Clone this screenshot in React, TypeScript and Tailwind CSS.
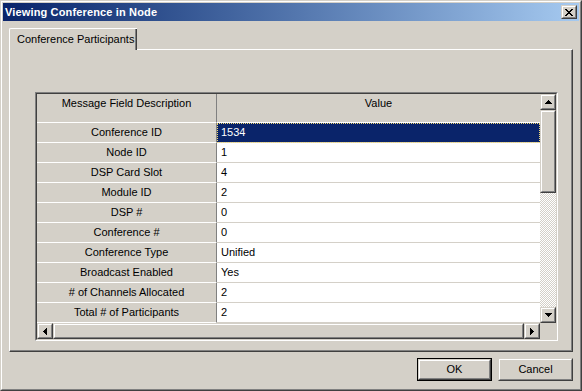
import React from "react";

const rows = [
  ["Conference ID", "1534"],
  ["Node ID", "1"],
  ["DSP Card Slot", "4"],
  ["Module ID", "2"],
  ["DSP #", "0"],
  ["Conference #", "0"],
  ["Conference Type", "Unified"],
  ["Broadcast Enabled", "Yes"],
  ["# of Channels Allocated", "2"],
  ["Total # of Participants", "2"],
];

// classic raised 3d edge, 2px
function Raised({ className = "", children }: { className?: string; children?: React.ReactNode }) {
  return (
    <div className={`border border-t-[#d4d0c8] border-l-[#d4d0c8] border-r-[#404040] border-b-[#404040] bg-[#d4d0c8] ${className}`}>
      <div className="w-full h-full border border-t-white border-l-white border-r-[#808080] border-b-[#808080] flex items-center justify-center">
        {children}
      </div>
    </div>
  );
}

function Arrow({ dir }: { dir: "up" | "down" | "left" | "right" }) {
  const pts = {
    up: "3.5,0 7,4 0,4",
    down: "0,0 7,0 3.5,4",
    left: "4,0 4,7 0,3.5",
    right: "0,0 4,3.5 0,7",
  }[dir];
  const vertical = dir === "up" || dir === "down";
  return (
    <svg width={vertical ? 7 : 4} height={vertical ? 4 : 7} shapeRendering="crispEdges">
      <polygon points={pts} fill="#000" />
    </svg>
  );
}

function CloseGlyph() {
  const px: [number, number][] = [
    [0, 0], [1, 0], [6, 0], [7, 0],
    [1, 1], [2, 1], [5, 1], [6, 1],
    [2, 2], [3, 2], [4, 2], [5, 2],
    [3, 3], [4, 3],
    [2, 4], [3, 4], [4, 4], [5, 4],
    [1, 5], [2, 5], [5, 5], [6, 5],
    [0, 6], [1, 6], [6, 6], [7, 6],
  ];
  return (
    <svg width={8} height={7} shapeRendering="crispEdges">
      {px.map(([x, y]) => (
        <rect key={`${x}-${y}`} x={x} y={y} width={1} height={1} fill="#000" />
      ))}
    </svg>
  );
}

export default function App() {
  return (
    <div className="w-[582px] h-[391px] bg-[#d4d0c8] border border-t-[#d4d0c8] border-l-[#d4d0c8] border-r-[#404040] border-b-[#404040] text-[11px] text-black font-['Liberation_Sans',Arial,sans-serif] leading-none">
      <div className="w-full h-full border border-t-white border-l-white border-r-[#808080] border-b-[#808080] p-px flex flex-col">
        {/* title bar */}
        <div className="h-[18px] flex items-center justify-between pl-[2px] pr-[2px] bg-gradient-to-r from-[#0a246a] to-[#a6caf0]">
          <span className="text-white font-bold text-[11px] tracking-[0.15px]">Viewing Conference in Node</span>
          <Raised className="w-[16px] h-[14px]">
            <CloseGlyph />
          </Raised>
        </div>

        {/* tabs + panel */}
        <div className="flex flex-col px-[6px] pt-[7px]">
          <div className="flex">
            <div className="relative z-10 -mb-px h-[22px] w-[128px] bg-[#d4d0c8] border-l border-t border-l-white border-t-white rounded-tl-[2px] flex">
              <div className="flex-1 pl-[7px] pt-[5px]">Conference Participants</div>
              <div className="w-px bg-[#808080]" />
              <div className="w-px bg-[#404040]" />
            </div>
          </div>
          <div className="h-[303px] border border-t-white border-l-white border-r-[#404040] border-b-[#404040]">
            <div className="w-full h-full border-r border-b border-r-[#808080] border-b-[#808080] pl-[25px] pt-[42px]">
              {/* grid */}
              <div className="w-[523px] h-[249px] border border-t-[#808080] border-l-[#808080] border-r-white border-b-white">
                <div className="w-full h-full border border-t-[#404040] border-l-[#404040] border-r-[#d4d0c8] border-b-[#d4d0c8] flex flex-col">
                  <div className="flex h-[229px]">
                    <div className="w-[503px] flex flex-col">
                      {/* header */}
                      <div className="flex h-[29px]">
                        <div className="w-[180px] bg-[#d4d0c8] border-r border-b border-r-[#808080] border-b-white text-center pt-[4px]">
                          Message Field Description
                        </div>
                        <div className="flex-1 bg-[#d4d0c8] border-b border-b-white text-center pt-[4px]">Value</div>
                      </div>
                      {rows.map(([label, value], i) => (
                        <div key={label} className="flex h-[20px]">
                          <div className="w-[180px] bg-[#d4d0c8] border-r border-b border-r-[#808080] border-b-white flex items-center justify-center">
                            {label}
                          </div>
                          {i === 0 ? (
                            <div className="flex-1 bg-[#0a246a] text-white border-b border-b-[#d4d0c8] flex items-center pl-[4px] outline outline-1 outline-dotted outline-[#f0d878] -outline-offset-1">
                              {value}
                            </div>
                          ) : (
                            <div className="flex-1 bg-white border-b border-b-[#d4d0c8] flex items-center pl-[4px]">{value}</div>
                          )}
                        </div>
                      ))}
                    </div>
                    {/* vertical scrollbar */}
                    <div className="w-[16px] flex flex-col">
                      <Raised className="h-[16px]">
                        <Arrow dir="up" />
                      </Raised>
                      <Raised className="h-[83px]" />
                      <div className="flex-1 bg-[repeating-conic-gradient(#ffffff_0_25%,#d4d0c8_0_50%)] bg-[length:2px_2px]" />
                      <Raised className="h-[16px]">
                        <Arrow dir="down" />
                      </Raised>
                    </div>
                  </div>
                  {/* horizontal scrollbar */}
                  <div className="flex h-[16px]">
                    <Raised className="w-[16px]">
                      <Arrow dir="left" />
                    </Raised>
                    <Raised className="flex-1" />
                    <Raised className="w-[16px]">
                      <Arrow dir="right" />
                    </Raised>
                    <div className="w-[16px] bg-[#d4d0c8]" />
                  </div>
                </div>
              </div>
            </div>
          </div>
        </div>

        {/* buttons */}
        <div className="flex justify-end gap-[6px] pt-[6px] pr-[6px]">
          <div className="border border-black">
            <Raised className="w-[73px] h-[21px]">OK</Raised>
          </div>
          <Raised className="w-[75px] h-[23px]">Cancel</Raised>
        </div>
      </div>
    </div>
  );
}
